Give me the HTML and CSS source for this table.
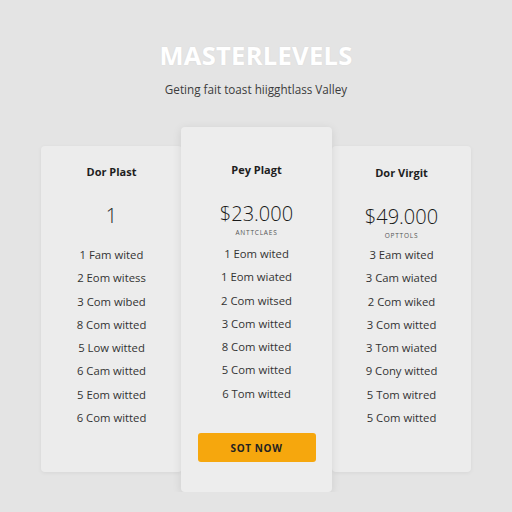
FILE: index.html
```html
<!DOCTYPE html>
<html lang="en">
<head>
  <meta charset="UTF-8">
  <title>Masterlevels Pricing</title>
  <link rel="stylesheet" href="styles.css">
</head>
<body>
  <header class="hero">
    <h1>MASTERLEVELS</h1>
    <p>Geting fait toast hiigghtlass Valley</p>
  </header>

  <section class="plans">
    <div class="card">
      <h3>Dor Plast</h3>
      <div class="price">1</div>
      <div class="price-note">&nbsp;</div>
      <ul class="features">
        <li>1 Fam wited</li>
        <li>2 Eom witess</li>
        <li>3 Com wibed</li>
        <li>8 Com witted</li>
        <li>5 Low witted</li>
        <li>6 Cam witted</li>
        <li>5 Eom witted</li>
        <li>6 Com witted</li>
      </ul>
    </div>

    <div class="card card--featured">
      <h3>Pey Plagt</h3>
      <div class="price">$23.000</div>
      <div class="price-note">ANTTCLAES</div>
      <ul class="features">
        <li>1 Eom wited</li>
        <li>1 Eom wiated</li>
        <li>2 Com witsed</li>
        <li>3 Com witted</li>
        <li>8 Com witted</li>
        <li>5 Com witted</li>
        <li>6 Tom witted</li>
      </ul>
      <button class="buy-btn">SOT NOW</button>
    </div>

    <div class="card card--right">
      <h3>Dor Virgit</h3>
      <div class="price">$49.000</div>
      <div class="price-note">OPTTOLS</div>
      <ul class="features">
        <li>3 Eam wited</li>
        <li>3 Cam wiated</li>
        <li>2 Com wiked</li>
        <li>3 Com witted</li>
        <li>3 Tom wiated</li>
        <li>9 Cony witted</li>
        <li>5 Tom witred</li>
        <li>5 Com witted</li>
      </ul>
    </div>
  </section>
</body>
</html>
```

FILE: styles.css
```css
body {
  margin: 0;
  background: #e4e4e4;
  font-family: "Open Sans", "Liberation Sans", sans-serif;
  color: #2a2a2a;
}
.hero {
  text-align: center;
  padding-top: 37px;
}
.hero h1 {
  margin: 0;
  font-size: 25.5px;
  line-height: 36px;
  font-weight: 700;
  color: #ffffff;
  letter-spacing: 0.3px;
  text-shadow: 0 0 2px rgba(0, 0, 0, 0.06);
}
.hero p {
  margin: 8px 0 0;
  font-size: 11.7px;
  line-height: 16px;
  color: #3c3c3c;
}
.plans {
  display: flex;
  justify-content: center;
  align-items: flex-start;
  margin-top: 30px;
}
.card {
  box-sizing: border-box;
  width: 141px;
  height: 326px;
  margin-top: 19px;
  padding-top: 19px;
  background: #ececec;
  border-radius: 4px;
  box-shadow: 0 1px 4px rgba(0, 0, 0, 0.06);
  text-align: center;
  display: flex;
  flex-direction: column;
  align-items: center;
}
.card--featured {
  position: relative;
  z-index: 1;
  width: 151px;
  height: 365px;
  margin-top: 0;
  margin-left: -1px;
  padding-top: 36px;
  background: #ededed;
  box-shadow: 0 2px 10px rgba(0, 0, 0, 0.10);
}
.card--right {
  width: 139px;
  padding-top: 20px;
}
.card h3 {
  margin: 0;
  font-size: 11px;
  line-height: 14px;
  font-weight: 700;
  color: #1e1e1e;
}
.price {
  margin-top: 23px;
  font-size: 20px;
  line-height: 27px;
  font-weight: 300;
  color: #1a1a1a;
}
.price-note {
  margin-top: 1px;
  font-size: 6.5px;
  line-height: 9px;
  letter-spacing: 0.8px;
  color: #555;
}
.features {
  list-style: none;
  margin: 4px 0 0;
  padding: 0;
}
.card--featured .features {
  margin-top: 5px;
}
.card--right .features {
  margin-top: 3px;
}
.features li {
  font-size: 11.3px;
  line-height: 23.3px;
  color: #333;
}
.buy-btn {
  margin-top: 28px;
  width: 118px;
  height: 29px;
  border: none;
  border-radius: 3px;
  background: #f6a70d;
  color: #222;
  font-family: "Open Sans", "Liberation Sans", sans-serif;
  font-size: 10px;
  font-weight: 700;
  letter-spacing: 0.6px;
  cursor: pointer;
}
```
